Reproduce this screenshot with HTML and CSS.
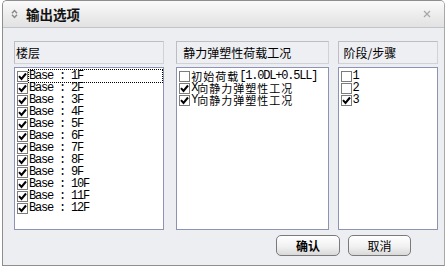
FILE: index.html
```html
<!DOCTYPE html>
<html lang="zh">
<head>
<meta charset="utf-8">
<title>输出选项</title>
<link rel="stylesheet" href="styles.css">
</head>
<body>
<div class="win">
  <div class="titlebar">
    <svg class="ticon" width="7" height="10" viewBox="0 0 7 10"><path d="M1 4.2 L3.5 1.5 L6 4.2 M1 5.8 L3.5 8.5 L6 5.8" fill="none" stroke="#8a8a8a" stroke-width="1.5"/></svg>
    <span class="title">输出选项</span>
    <svg class="close" width="8" height="8" viewBox="0 0 8 8"><path d="M1 1 L7 7 M7 1 L1 7" stroke="#a8a8a8" stroke-width="1.3"/></svg>
  </div>
  <div class="body">
    <div class="cols">
      <div class="col c1">
        <div class="hdr">楼层</div>
        <div class="list">
          <div class="row"><span class="cb on"></span><span class="lbl focus"><span class="m">Base : 1F</span></span></div>
          <div class="row"><span class="cb on"></span><span class="lbl"><span class="m">Base : 2F</span></span></div>
          <div class="row"><span class="cb on"></span><span class="lbl"><span class="m">Base : 3F</span></span></div>
          <div class="row"><span class="cb on"></span><span class="lbl"><span class="m">Base : 4F</span></span></div>
          <div class="row"><span class="cb on"></span><span class="lbl"><span class="m">Base : 5F</span></span></div>
          <div class="row"><span class="cb on"></span><span class="lbl"><span class="m">Base : 6F</span></span></div>
          <div class="row"><span class="cb on"></span><span class="lbl"><span class="m">Base : 7F</span></span></div>
          <div class="row"><span class="cb on"></span><span class="lbl"><span class="m">Base : 8F</span></span></div>
          <div class="row"><span class="cb on"></span><span class="lbl"><span class="m">Base : 9F</span></span></div>
          <div class="row"><span class="cb on"></span><span class="lbl"><span class="m">Base : 10F</span></span></div>
          <div class="row"><span class="cb on"></span><span class="lbl"><span class="m">Base : 11F</span></span></div>
          <div class="row"><span class="cb on"></span><span class="lbl"><span class="m">Base : 12F</span></span></div>
        </div>
      </div>
      <div class="col c2">
        <div class="hdr">静力弹塑性荷载工况</div>
        <div class="list">
          <div class="row"><span class="cb"></span><span class="lbl"><span class="c">初始荷载</span><span class="m">[1.0DL+0.5LL]</span></span></div>
          <div class="row"><span class="cb on"></span><span class="lbl"><span class="m">X</span><span class="c">向静力弹塑性工况</span></span></div>
          <div class="row"><span class="cb on"></span><span class="lbl"><span class="m">Y</span><span class="c">向静力弹塑性工况</span></span></div>
        </div>
      </div>
      <div class="col c3">
        <div class="hdr">阶段/步骤</div>
        <div class="list">
          <div class="row"><span class="cb"></span><span class="lbl"><span class="m">1</span></span></div>
          <div class="row"><span class="cb"></span><span class="lbl"><span class="m">2</span></span></div>
          <div class="row"><span class="cb on"></span><span class="lbl"><span class="m">3</span></span></div>
        </div>
      </div>
    </div>
    <div class="btns">
      <button class="btn ok">确认</button>
      <button class="btn">取消</button>
    </div>
  </div>
</div>
</body>
</html>
```
FILE: styles.css
```css
html, body {
  margin: 0;
  padding: 0;
  background: #ffffff;
}
body {
  font-family: "Noto Sans CJK SC", "Liberation Sans", sans-serif;
  font-size: 12px;
  color: #000;
}
.win {
  box-sizing: border-box;
  margin-left: 2px;
  width: 443px;
  height: 266px;
  border: 1px solid #8e8e8e;
  border-right-color: #a8a8a8;
  border-radius: 5px 5px 0 0;
  background: #edeef2;
  display: flex;
  flex-direction: column;
}
.titlebar {
  box-sizing: border-box;
  height: 27px;
  display: flex;
  align-items: center;
  padding-left: 8px;
  padding-right: 13px;
  border-bottom: 1px solid #c4c4c8;
  border-radius: 4px 4px 0 0;
  background: linear-gradient(#fafafa, #ececec 55%, #e2e2e4);
}
.ticon {
  display: block;
}
.title {
  margin-left: 8px;
  font-weight: bold;
  font-size: 13.5px;
  line-height: 16px;
  color: #111;
}
.close {
  margin-left: auto;
  display: block;
}
.body {
  flex: 1;
  padding: 13px 6px 0 11px;
  display: flex;
  flex-direction: column;
}
.cols {
  display: flex;
}
.col {
  display: flex;
  flex-direction: column;
}
.c1 { width: 151px; }
.c2 { width: 153px; margin-left: 12px; }
.c3 { width: 101px; margin-left: 9px; }
.hdr {
  box-sizing: border-box;
  height: 23px;
  border: 1px solid #bdbdc3;
  border-right-color: #d2d2d6;
  border-bottom-color: #d2d2d6;
  background: #eeeff3;
  line-height: 21px;
  white-space: nowrap;
}
.c1 .hdr { padding-left: 1px; }
.c2 .hdr { padding-left: 6px; }
.c3 .hdr { padding-left: 5px; }
.list {
  box-sizing: border-box;
  margin-top: 3px;
  height: 163px;
  border: 1px solid #8d94b3;
  background: #ffffff;
  padding: 2px 1px 0 2px;
}
.row {
  display: flex;
  height: 12px;
  white-space: nowrap;
}
.cb {
  box-sizing: border-box;
  flex: none;
  width: 11px;
  height: 11px;
  margin-top: 1px;
  border: 1px solid #7c7c7c;
  background: #fff;
}
.cb.on {
  background: #fff url("data:image/svg+xml;utf8,<svg xmlns='http://www.w3.org/2000/svg' width='9' height='9' viewBox='0 0 9 9'><path d='M1 4.2 L3.5 7 L8 1.5' fill='none' stroke='black' stroke-width='2'/></svg>") no-repeat center;
}
.lbl {
  flex: 1;
  display: flex;
  align-items: center;
  margin-left: 1px;
  height: 12px;
}
.focus {
  outline: 1px dotted #000;
}
.m, .c {
  display: block;
  line-height: 12px;
}
.m {
  font-family: "Liberation Mono", monospace;
  font-size: 12px;
  letter-spacing: -1.2px;
}
.c {
  font-size: 11px;
  letter-spacing: 1px;
}
.btns {
  display: flex;
  justify-content: flex-end;
  gap: 8px;
  margin-top: 5px;
  padding-right: 27px;
}
.btn {
  box-sizing: border-box;
  width: 64px;
  height: 21px;
  padding: 0;
  border: 1px solid #7a7a7a;
  border-radius: 5px;
  background: linear-gradient(#ffffff, #f1f1f1 55%, #d9d9d9);
  font-family: "Noto Sans CJK SC", sans-serif;
  font-size: 12px;
  line-height: 19px;
  color: #000;
}
.btn + .btn {
  width: 63px;
}
.ok {
  font-weight: bold;
}
```
